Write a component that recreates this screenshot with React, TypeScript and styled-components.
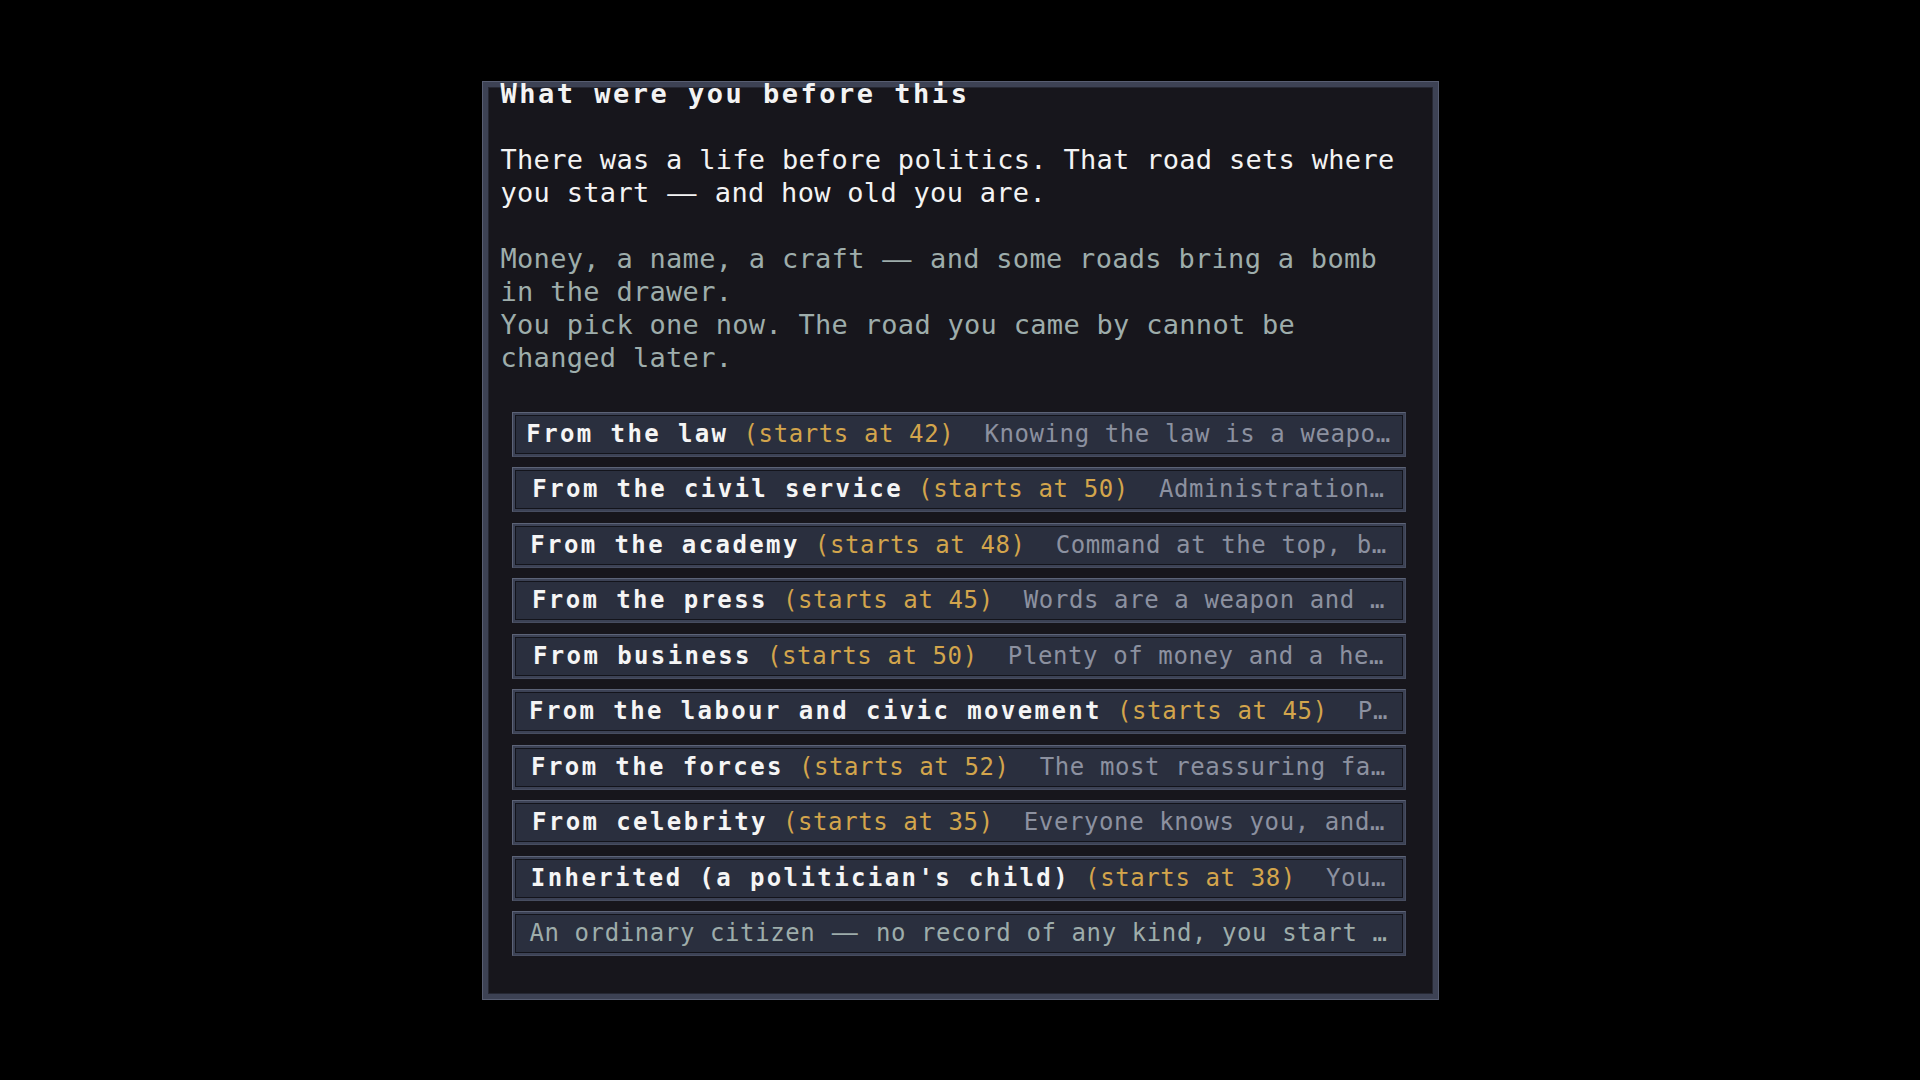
import styled, { createGlobalStyle } from "styled-components";

const GlobalStyle = createGlobalStyle`
  html, body {
    margin: 0;
    padding: 0;
    background: #000;
  }
  * {
    box-sizing: border-box;
  }
`;

const Page = styled.div`
  min-height: 100vh;
  display: flex;
  align-items: center;
  justify-content: center;
  background: #000;
  font-family: "DejaVu Sans Mono", "Liberation Mono", monospace;
`;

const Panel = styled.section`
  width: 955px;
  height: 917px;
  background: #17161c;
  border: 5px solid #3d4254;
  box-shadow: 0 0 0 1px #585e72, inset 0 0 0 1px #262833;
  padding: 0 0 0 13px;
  display: flex;
  flex-direction: column;
`;

const Intro = styled.div`
  margin-top: -10px;
  font-size: 27px;
  line-height: 33px;
  letter-spacing: 0.3px;
  white-space: pre;
`;

const Line = styled.div<{ $tone?: "bright" | "muted" }>`
  height: 33px;
  color: ${({ $tone }) => ($tone === "muted" ? "#9eadab" : "#f3f3f3")};
`;

const Heading = styled(Line)`
  font-weight: bold;
  letter-spacing: 2.5px;
`;

const Blank = styled.div`
  height: 33px;
`;

// the long dash takes about two cells and is drawn stretched
const Dash = styled.span`
  display: inline-block;
  width: calc(1ch + 16px);
  text-align: center;
  transform: scaleX(1.8);
`;

const Choices = styled.div`
  margin: 38px 0 0 11px;
  width: 894px;
  display: flex;
  flex-direction: column;
  gap: 10.5px;
`;

const Choice = styled.button`
  height: 45px;
  width: 100%;
  padding: 0 6px;
  background: #2a2f3e;
  border: 1px solid #5c6377;
  border-right-color: #474d60;
  border-bottom-color: #474d60;
  box-shadow: inset 0 0 0 2px #3c4255, inset 0 0 0 3px #13141b;
  font-family: inherit;
  font-size: 24px;
  line-height: 43px;
  letter-spacing: 0.6px;
  text-align: center;
  white-space: pre;
  overflow: hidden;
  cursor: pointer;
`;

const Label = styled.span`
  color: #f5f5f5;
  font-weight: bold;
  letter-spacing: 2.4px;
`;

const Age = styled.span`
  color: #d3a54c;
`;

const Blurb = styled.span<{ $plain?: boolean }>`
  color: ${({ $plain }) => ($plain ? "#9eadab" : "#8c91a0")};
`;

const origins = [
  { label: "From the law", age: 42, blurb: "Knowing the law is a weapo…" },
  { label: "From the civil service", age: 50, blurb: "Administration…" },
  { label: "From the academy", age: 48, blurb: "Command at the top, b…" },
  { label: "From the press", age: 45, blurb: "Words are a weapon and …" },
  { label: "From business", age: 50, blurb: "Plenty of money and a he…" },
  { label: "From the labour and civic movement", age: 45, blurb: "P…" },
  { label: "From the forces", age: 52, blurb: "The most reassuring fa…" },
  { label: "From celebrity", age: 35, blurb: "Everyone knows you, and…" },
  { label: "Inherited (a politician's child)", age: 38, blurb: "You…" },
];

export default function App() {
  return (
    <Page>
      <GlobalStyle />
      <Panel>
        <Intro>
          <Heading>What were you before this</Heading>
          <Blank />
          <Line>There was a life before politics. That road sets where</Line>
          <Line>
            you start <Dash>—</Dash> and how old you are.
          </Line>
          <Blank />
          <Line $tone="muted">
            Money, a name, a craft <Dash>—</Dash> and some roads bring a bomb
          </Line>
          <Line $tone="muted">in the drawer.</Line>
          <Line $tone="muted">You pick one now. The road you came by cannot be</Line>
          <Line $tone="muted">changed later.</Line>
        </Intro>
        <Choices>
          {origins.map((o) => (
            <Choice key={o.label}>
              <Label>{o.label}</Label> <Age>(starts at {o.age})</Age>
              {"  "}
              <Blurb>{o.blurb}</Blurb>
            </Choice>
          ))}
          <Choice>
            <Blurb $plain>
              An ordinary citizen <Dash>—</Dash> no record of any kind, you start …
            </Blurb>
          </Choice>
        </Choices>
      </Panel>
    </Page>
  );
}
